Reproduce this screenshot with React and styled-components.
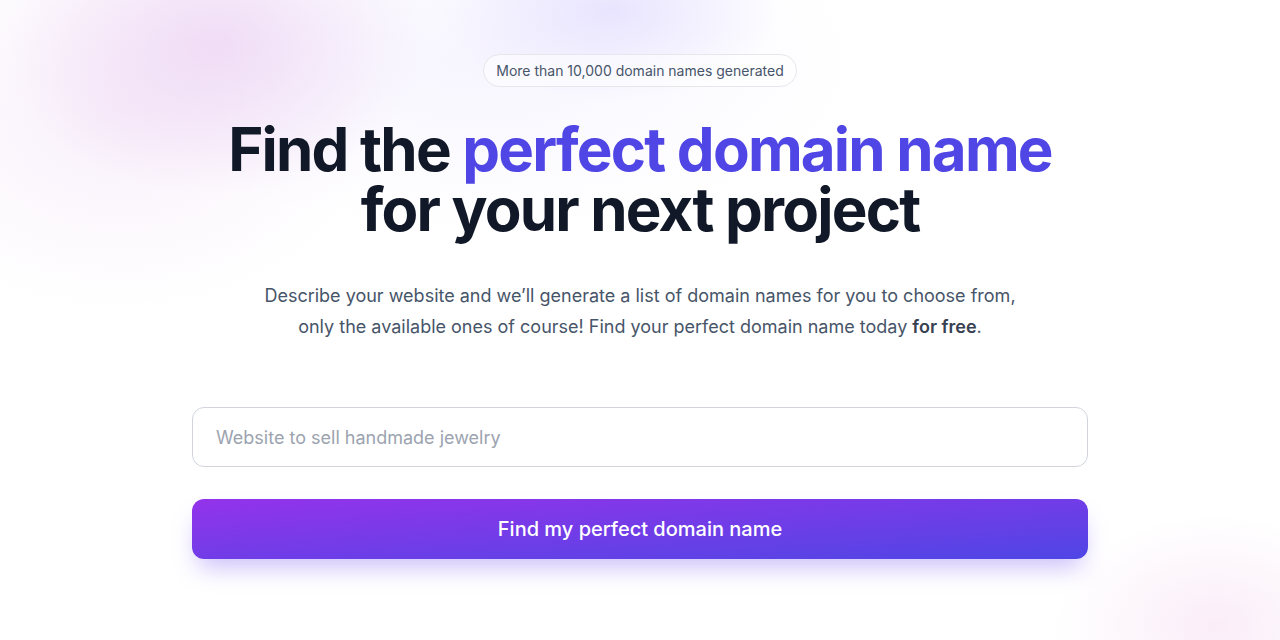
import React from 'react'
import styled, { createGlobalStyle } from 'styled-components'

const GlobalStyle = createGlobalStyle`
  html, body {
    margin: 0;
    padding: 0;
  }

  body {
    font-family: Inter, 'Noto Sans', sans-serif;
    background: #fff;
    -webkit-font-smoothing: antialiased;
  }
`

const Page = styled.main`
  min-height: 640px;
  box-sizing: border-box;
  padding-top: 54px;
  display: flex;
  flex-direction: column;
  align-items: center;
  overflow: hidden;

  /* soft blurred blobs behind the hero */
  background:
    radial-gradient(ellipse 210px 150px at 215px 45px, rgba(232, 200, 240, 0.55), rgba(232, 200, 240, 0) 100%),
    radial-gradient(ellipse 260px 200px at 120px 110px, rgba(240, 220, 245, 0.45), rgba(240, 220, 245, 0) 100%),
    radial-gradient(ellipse 170px 90px at 610px 10px, rgba(221, 214, 254, 0.6), rgba(221, 214, 254, 0) 100%),
    radial-gradient(ellipse 380px 170px at 480px 60px, rgba(237, 233, 254, 0.45), rgba(237, 233, 254, 0) 100%),
    radial-gradient(ellipse 160px 110px at 1215px 625px, rgba(245, 215, 240, 0.45), rgba(245, 215, 240, 0) 100%),
    #fff;
`

const Badge = styled.div`
  box-sizing: border-box;
  height: 33px;
  padding: 0 12px;
  display: flex;
  align-items: center;
  border: 1px solid #e5e7eb;
  border-radius: 999px;
  background: rgba(255, 255, 255, 0.55);
  font-size: 14px;
  color: #475569;
`

const Title = styled.h1`
  margin: 32px 0 0;
  font-family: Inter, 'Noto Sans', sans-serif;
  font-size: 60px;
  font-weight: 700;
  line-height: 60px;
  letter-spacing: -0.03em;
  color: #111827;
  text-align: center;
`

const Accent = styled.span`
  color: #4f46e5;
`

const Lead = styled.p`
  margin: 41px 0 0;
  max-width: 760px;
  font-size: 18px;
  line-height: 31px;
  color: #475569;
  text-align: center;

  & strong {
    font-weight: 600;
    color: #374151;
  }
`

const Form = styled.form`
  width: 896px;
  margin-top: 65px;
  display: flex;
  flex-direction: column;
  gap: 32px;
`

const Input = styled.input`
  box-sizing: border-box;
  height: 60px;
  padding: 0 23px;
  border: 1px solid #d1d5db;
  border-radius: 12px;
  background: #fff;
  font-family: Inter, 'Noto Sans', sans-serif;
  font-size: 18px;
  color: #111827;
  outline: none;

  &::placeholder {
    color: #9ca3af;
  }
`

const Button = styled.button`
  height: 60px;
  border: 0;
  border-radius: 12px;
  background: linear-gradient(to bottom right, #9333ea 0%, #4f46e5 100%);
  box-shadow: 0 14px 24px -6px rgba(124, 92, 240, 0.4);
  font-family: Inter, 'Noto Sans', sans-serif;
  font-size: 20px;
  font-weight: 500;
  color: #fff;
  cursor: pointer;
`

const App = () => (
  <>
    <GlobalStyle />
    <Page>
      <Badge>More than 10,000 domain names generated</Badge>
      <Title>
        Find the <Accent>perfect domain name</Accent>
        <br />
        for your next project
      </Title>
      <Lead>
        Describe your website and we’ll generate a list of domain names for you to choose from,
        only the available ones of course! Find your perfect domain name today{' '}
        <strong>for free</strong>.
      </Lead>
      <Form onSubmit={(e) => e.preventDefault()}>
        <Input placeholder="Website to sell handmade jewelry" />
        <Button type="submit">Find my perfect domain name</Button>
      </Form>
    </Page>
  </>
)

export default App
